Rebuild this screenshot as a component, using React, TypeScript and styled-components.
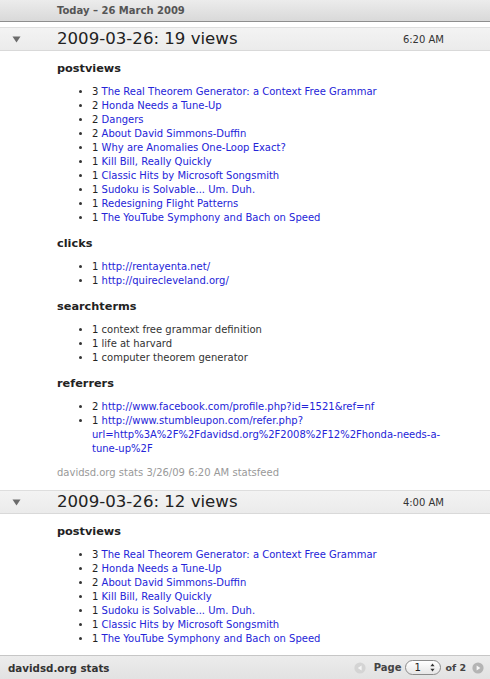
import React from 'react';
import styled, { createGlobalStyle } from 'styled-components';

const GlobalStyle = createGlobalStyle`
  html, body {
    margin: 0;
    padding: 0;
    background: #fff;
  }
  body {
    font-family: "DejaVu Sans", Verdana, sans-serif;
    font-size: 10px;
    color: #333;
  }
`

const Page = styled.div`
  height: 100vh;
  display: flex;
  flex-direction: column;
  overflow: hidden;
`

const TopBar = styled.div`
  flex: none;
  height: 21px;
  line-height: 21px;
  padding-left: 57px;
  background: linear-gradient(#ececec, #d9d9d9);
  border-bottom: 1px solid #8e8e8e;

  font-size: 10px;
  font-weight: bold;
  color: #555;
`

const Feed = styled.div`
  flex: 1;
  min-height: 0;
  overflow: hidden;
  padding-top: 5px;
`

const EntryHeader = styled.div`
  height: 22px;
  display: grid;
  grid-template-columns: 57px 1fr auto;
  align-items: center;
  padding-right: 46px;

  background: linear-gradient(#f3f3f3, #ebebeb);
  border-top: 1px solid #dedede;
  border-bottom: 1px solid #d9d9d9;

  .toggle {
    margin-left: 12px;
  }
`

const EntryTitle = styled.div`
  font-size: 16.6px;
  color: #222;
  line-height: 22px;
`

const EntryTime = styled.div`
  font-size: 10px;
  color: #333;
`

const EntryBody = styled.div`
  padding: 10px 40px 10px 57px;
`

const SectionTitle = styled.div`
  font-size: 11.3px;
  font-weight: bold;
  color: #222;
  line-height: 16px;
  margin-bottom: 8px;
`

const List = styled.ul`
  margin: 0 0 11px 0;
  padding-left: 35px;
  list-style: disc;

  li {
    line-height: 14px;
    color: #333;
  }

  li::marker {
    color: #333;
  }

  .count {
    color: #222;
  }

  a {
    color: #2424d8;
    text-decoration: none;
  }
`

const EntryFooter = styled.div`
  margin-top: -1px;
  line-height: 14px;
  color: #999;
`

const BottomBar = styled.div`
  flex: none;
  height: 23px;
  display: flex;
  align-items: center;
  justify-content: space-between;
  padding: 0 6px 0 8px;
  background: linear-gradient(#ececec, #e2e2e2);
  border-top: 1px solid #c6c6c6;
`

const SiteName = styled.div`
  font-size: 10.3px;
  font-weight: bold;
  color: #333;
`

const Pager = styled.div`
  display: flex;
  align-items: center;
  gap: 4px;
  font-weight: bold;
  color: #444;
`

const PageLabel = styled.span`
  margin: 0 0 0 4px;
`

const PageCount = styled.span`
  font-size: 9.5px;
  margin-right: 2px;
`

const PageSelect = styled.span`
  display: inline-flex;
  align-items: center;
  justify-content: space-between;
  box-sizing: border-box;
  width: 36px;
  height: 15px;
  padding: 0 5px 0 8px;
  border: 1px solid #8a8a8a;
  border-radius: 8px;
  background: linear-gradient(#ffffff, #e6e6e6);
  font-weight: normal;
  color: #222;
`

type Item = { n: number; text: React.ReactNode; link?: boolean }
type Section = { title: string; items: Item[] }
type Entry = { title: string; time: string; sections: Section[]; footer?: string }

const postviewsA: Item[] = [
  { n: 3, text: 'The Real Theorem Generator: a Context Free Grammar', link: true },
  { n: 2, text: 'Honda Needs a Tune-Up', link: true },
  { n: 2, text: 'Dangers', link: true },
  { n: 2, text: 'About David Simmons-Duffin', link: true },
  { n: 1, text: 'Why are Anomalies One-Loop Exact?', link: true },
  { n: 1, text: 'Kill Bill, Really Quickly', link: true },
  { n: 1, text: 'Classic Hits by Microsoft Songsmith', link: true },
  { n: 1, text: 'Sudoku is Solvable... Um. Duh.', link: true },
  { n: 1, text: 'Redesigning Flight Patterns', link: true },
  { n: 1, text: 'The YouTube Symphony and Bach on Speed', link: true },
]

const postviewsB: Item[] = [
  { n: 3, text: 'The Real Theorem Generator: a Context Free Grammar', link: true },
  { n: 2, text: 'Honda Needs a Tune-Up', link: true },
  { n: 2, text: 'About David Simmons-Duffin', link: true },
  { n: 1, text: 'Kill Bill, Really Quickly', link: true },
  { n: 1, text: 'Sudoku is Solvable... Um. Duh.', link: true },
  { n: 1, text: 'Classic Hits by Microsoft Songsmith', link: true },
  { n: 1, text: 'The YouTube Symphony and Bach on Speed', link: true },
]

const entries: Entry[] = [
  {
    title: '2009-03-26: 19 views',
    time: '6:20 AM',
    footer: 'davidsd.org stats 3/26/09 6:20 AM statsfeed',
    sections: [
      { title: 'postviews', items: postviewsA },
      {
        title: 'clicks',
        items: [
          { n: 1, text: 'http://rentayenta.net/', link: true },
          { n: 1, text: 'http://quirecleveland.org/', link: true },
        ],
      },
      {
        title: 'searchterms',
        items: [
          { n: 1, text: 'context free grammar definition' },
          { n: 1, text: 'life at harvard' },
          { n: 1, text: 'computer theorem generator' },
        ],
      },
      {
        title: 'referrers',
        items: [
          { n: 2, text: 'http://www.facebook.com/profile.php?id=1521&ref=nf', link: true },
          {
            n: 1,
            link: true,
            text: (
              <>
                http://www.stumbleupon.com/refer.php?<wbr />
                url=http%3A%2F%2Fdavidsd.org%2F2008%2F12%2Fhonda-needs-a-<wbr />tune-up%2F
              </>
            ),
          },
        ],
      },
    ],
  },
  {
    title: '2009-03-26: 12 views',
    time: '4:00 AM',
    sections: [{ title: 'postviews', items: postviewsB }],
  },
]

function Toggle() {
  return (
    <svg className='toggle' width='9' height='7' viewBox='0 0 9 7'>
      <path d='M0.5 0.5 L8.5 0.5 L4.5 6.5 Z' fill='#6b6b6b' />
    </svg>
  )
}

function PagerArrow({ dir, enabled }: { dir: 'left' | 'right'; enabled: boolean }) {
  const d = dir === 'left' ? 'M7.6 3.6 L7.6 8.4 L3.8 6 Z' : 'M4.6 3.6 L4.6 8.4 L8.4 6 Z'
  return (
    <svg width='12' height='12' viewBox='0 0 12 12'>
      <circle cx='6' cy='6' r='5.6' fill={enabled ? '#b4b4b4' : '#d4d4d4'} />
      <path d={d} fill='#f6f6f6' />
    </svg>
  )
}

function UpDown() {
  return (
    <svg width='5' height='9' viewBox='0 0 5 9'>
      <path d='M2.5 0.5 L4.6 3.3 L0.4 3.3 Z' fill='#333' />
      <path d='M2.5 8.5 L4.6 5.7 L0.4 5.7 Z' fill='#333' />
    </svg>
  )
}

export default function App() {
  return (
    <Page>
      <GlobalStyle />
      <TopBar>Today – 26 March 2009</TopBar>
      <Feed>
        {entries.map((entry) => (
          <div key={entry.title + entry.time}>
            <EntryHeader>
              <Toggle />
              <EntryTitle>{entry.title}</EntryTitle>
              <EntryTime>{entry.time}</EntryTime>
            </EntryHeader>
            <EntryBody>
              {entry.sections.map((section) => (
                <div key={section.title}>
                  <SectionTitle>{section.title}</SectionTitle>
                  <List>
                    {section.items.map((item, i) => (
                      <li key={i}>
                        <span className='count'>{item.n}</span>{' '}
                        {item.link ? <a href='#'>{item.text}</a> : item.text}
                      </li>
                    ))}
                  </List>
                </div>
              ))}
              {entry.footer && <EntryFooter>{entry.footer}</EntryFooter>}
            </EntryBody>
          </div>
        ))}
      </Feed>
      <BottomBar>
        <SiteName>davidsd.org stats</SiteName>
        <Pager>
          <PagerArrow dir='left' enabled={false} />
          <PageLabel>Page</PageLabel>
          <PageSelect>
            1
            <UpDown />
          </PageSelect>
          <PageCount>of 2</PageCount>
          <PagerArrow dir='right' enabled={true} />
        </Pager>
      </BottomBar>
    </Page>
  )
}
